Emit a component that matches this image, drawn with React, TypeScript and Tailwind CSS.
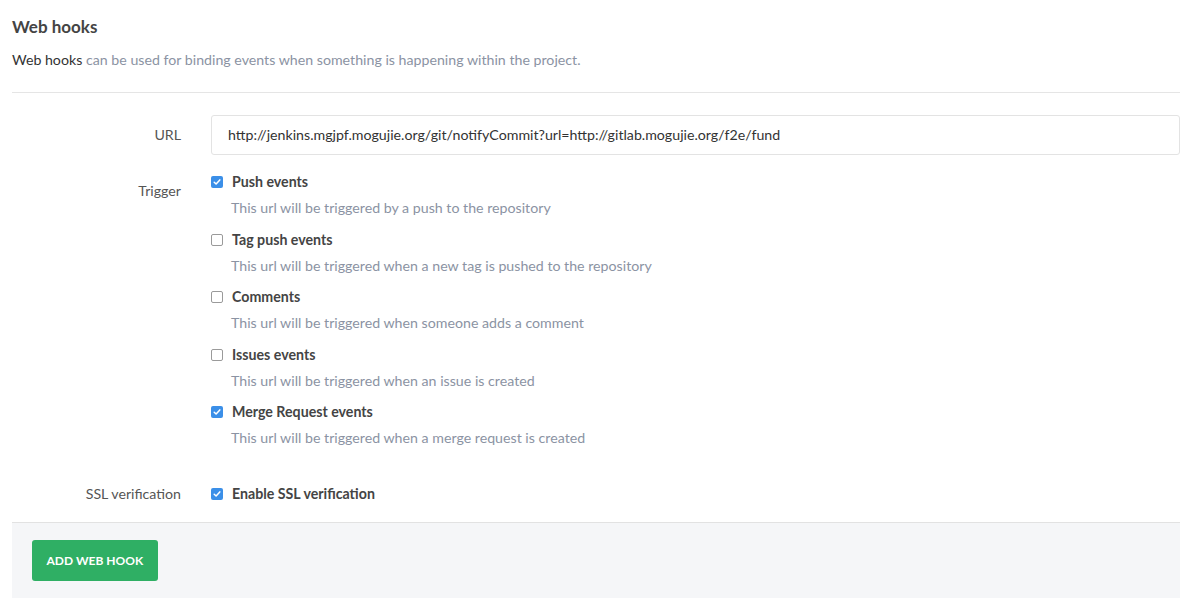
const events = [
  { label: "Push events", help: "This url will be triggered by a push to the repository", checked: true },
  { label: "Tag push events", help: "This url will be triggered when a new tag is pushed to the repository", checked: false },
  { label: "Comments", help: "This url will be triggered when someone adds a comment", checked: false },
  { label: "Issues events", help: "This url will be triggered when an issue is created", checked: false },
  { label: "Merge Request events", help: "This url will be triggered when a merge request is created", checked: true },
];

function Check({ checked }: { checked: boolean }) {
  if (checked) {
    return (
      <span className="flex h-[12px] w-[12px] shrink-0 items-center justify-center rounded-[2px] bg-[#3b8fe8]">
        <svg viewBox="0 0 12 12" className="h-[12px] w-[12px]">
          <path d="M3.2 6.2 L5.1 8 L8.8 3.9" fill="none" stroke="white" strokeWidth="1.5" strokeLinecap="round" strokeLinejoin="round" />
        </svg>
      </span>
    );
  }
  return <span className="h-[12px] w-[12px] shrink-0 rounded-[2px] border border-[#9a9a9a] bg-white" />;
}

export default function App() {
  return (
    <div className="min-h-[598px] bg-white pl-[12px] pr-[3px] pt-[15px] text-[14.2px] text-[#4c4c4c] [font-family:Lato,'Liberation_Sans',sans-serif]">
      <h3 className="text-[17px] font-bold leading-[24px] text-[#444]">Web hooks</h3>
      <p className="mt-[11px] leading-[20px] text-[#8b93a3]">
        <span className="text-[#333]">Web hooks</span> can be used for binding events when something is happening within the project.
      </p>
      <div className="mt-[22px] border-t border-[#e5e5e5]" />

      <div className="pt-[22px]">
        <div className="flex items-center">
          <div className="w-[169px] text-right text-[#555]">URL</div>
          <div className="ml-[30px] flex-1">
            <div className="flex h-[40px] items-center rounded-[3px] border border-[#e3e3e3] px-[16px] text-[#333]">
              http://jenkins.mgjpf.mogujie.org/git/notifyCommit?url=http://gitlab.mogujie.org/f2e/fund
            </div>
          </div>
        </div>

        <div className="mt-[17px] flex">
          <div className="w-[169px] pt-[9px] text-right leading-[20px] text-[#555]">Trigger</div>
          <div className="ml-[30px] flex flex-col">
            {events.map((e) => (
              <div key={e.label} className="mb-[11.5px]">
                <div className="flex items-center gap-[9px] leading-[20px]">
                  <Check checked={e.checked} />
                  <span className="font-bold text-[#444]">{e.label}</span>
                </div>
                <div className="ml-[20px] mt-[6px] leading-[20px] text-[#8b93a3]">{e.help}</div>
              </div>
            ))}
          </div>
        </div>

        <div className="mt-[24.5px] flex items-center leading-[20px]">
          <div className="w-[169px] text-right text-[#555]">SSL verification</div>
          <div className="ml-[30px] flex items-center gap-[9px]">
            <Check checked />
            <span className="font-bold text-[#444]">Enable SSL verification</span>
          </div>
        </div>
      </div>

      <div className="mt-[18px] mr-[0px] border-t border-[#e2e2e2] bg-[#f5f6f8] px-[20px] pt-[17px] pb-[18px]">
        <button className="h-[41px] rounded-[3px] bg-[#2faf64] px-[14.5px] text-[12px] font-bold uppercase text-white">
          Add web hook
        </button>
      </div>
    </div>
  );
}
